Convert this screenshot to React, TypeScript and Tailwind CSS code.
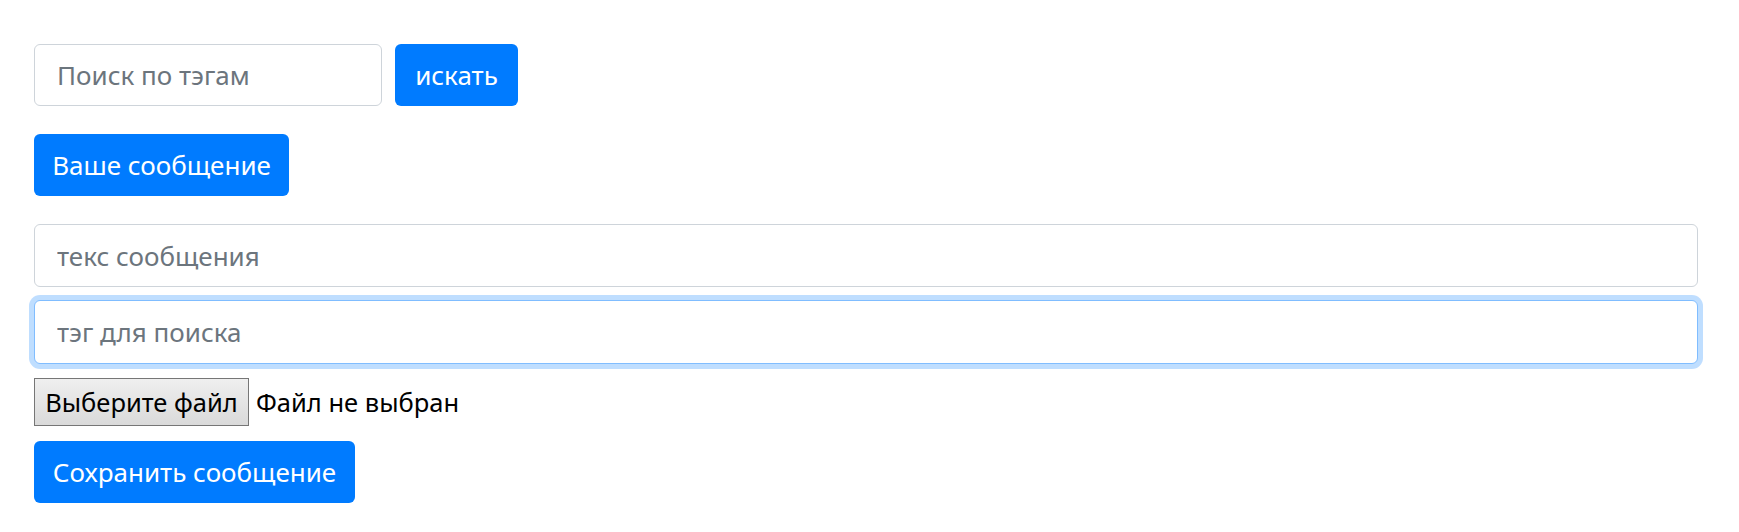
const font = { fontFamily: '"Noto Sans", "Open Sans", sans-serif' };

const App = () => {
    return (
        <div style={font} className="min-h-[532px] w-full bg-white pl-[34px] pr-[41px] pt-[44px] text-[26px] leading-[1.5] text-[#212529]">
            {/* search */}
            <div className="flex items-center gap-[13px]">
                <input
                    type="text"
                    placeholder="Поиск по тэгам"
                    className="h-[62px] w-[348px] rounded-[6px] border-[1.5px] border-[#ced4da] bg-white px-[22px] text-[#495057] outline-none placeholder:text-[#6c757d]"
                />
                <button className="h-[62px] w-[123px] rounded-[6px] bg-[#007bff] text-white">искать</button>
            </div>

            <div className="mt-[28px]">
                <button className="h-[62px] w-[255px] rounded-[6px] bg-[#007bff] text-white">Ваше сообщение</button>
            </div>

            {/* message form */}
            <div className="mt-[28px] flex flex-col">
                <input
                    type="text"
                    placeholder="текс сообщения"
                    className="h-[63px] w-full rounded-[6px] border-[1.5px] border-[#ced4da] bg-white px-[22px] outline-none placeholder:text-[#6c757d]"
                />
                <input
                    type="text"
                    placeholder="тэг для поиска"
                    className="mt-[13px] h-[64px] w-full rounded-[6px] border-[1.5px] border-[#80bdff] bg-white px-[22px] shadow-[0_0_0_5px_rgba(0,123,255,0.25)] outline-none placeholder:text-[#6c757d]"
                />

                <div className="mt-[14px] flex items-center text-[25.5px]">
                    <span className="flex h-[48px] w-[215px] items-center justify-center border-[1.5px] border-[#767676] bg-gradient-to-b from-[#efefef] to-[#dadada] text-black">
                        Выберите файл
                    </span>
                    <span className="ml-[7px] text-black">Файл не выбран</span>
                </div>

                <div className="mt-[15px]">
                    <button className="h-[62px] w-[321px] rounded-[6px] bg-[#007bff] text-white">Сохранить сообщение</button>
                </div>
            </div>
        </div>
    );
};

export default App;
